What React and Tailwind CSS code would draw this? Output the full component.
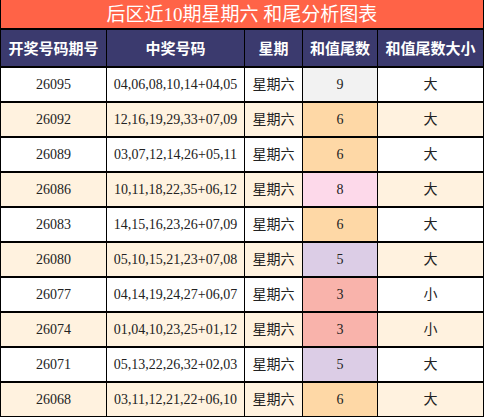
// 后区近10期星期六 和尾分析图表

const rows = [
  { qi: '26095', code: '04,06,08,10,14+04,05', tail: 9, size: '大' },
  { qi: '26092', code: '12,16,19,29,33+07,09', tail: 6, size: '大' },
  { qi: '26089', code: '03,07,12,14,26+05,11', tail: 6, size: '大' },
  { qi: '26086', code: '10,11,18,22,35+06,12', tail: 8, size: '大' },
  { qi: '26083', code: '14,15,16,23,26+07,09', tail: 6, size: '大' },
  { qi: '26080', code: '05,10,15,21,23+07,08', tail: 5, size: '大' },
  { qi: '26077', code: '04,14,19,24,27+06,07', tail: 3, size: '小' },
  { qi: '26074', code: '01,04,10,23,25+01,12', tail: 3, size: '小' },
  { qi: '26071', code: '05,13,22,26,32+02,03', tail: 5, size: '大' },
  { qi: '26068', code: '03,11,12,21,22+06,10', tail: 6, size: '大' },
]

const tailBg = {
  9: 'bg-[#f2f2f2]',
  8: 'bg-[#fdd9ea]',
  6: 'bg-[#fed8a6]',
  5: 'bg-[#dccde6]',
  3: 'bg-[#f9b3ab]',
}

const font = "font-['Liberation_Serif','Noto_Sans_CJK_SC',serif]"
const cols = ['w-[106px]', 'w-[138px]', 'w-[58px]', 'w-[75px]', 'flex-1']

export default function App() {
  return (
    <div className={`w-[484px] h-[417px] bg-white border-x border-black text-[#222] ${font}`}>
      <div className="h-[30px] border-b-2 border-black bg-[#ff6347] flex items-center justify-center text-white text-[19px] leading-none">
        后区近10期星期六 和尾分析图表
      </div>

      <div className="h-[38px] border-b-2 border-black bg-[#3b3a6e] flex text-white text-[15px] font-bold font-['Noto_Sans_CJK_SC',sans-serif]">
        {['开奖号码期号', '中奖号码', '星期', '和值尾数', '和值尾数大小'].map((t, i) => (
          <div key={t} className={`${cols[i]} flex items-center justify-center ${i < 4 ? 'border-r border-black' : ''}`}>
            {t}
          </div>
        ))}
      </div>

      {rows.map((r, idx) => {
        const last = idx === rows.length - 1
        const bg = idx % 2 ? 'bg-[#fff2df]' : 'bg-white'
        return (
          <div key={r.qi} className={`flex text-[14px] ${bg} ${last ? 'h-[34px] border-b' : 'h-[35px] border-b-2'} border-black`}>
            <div className={`${cols[0]} border-r border-black flex items-center justify-center`}>{r.qi}</div>
            <div className={`${cols[1]} border-r border-black flex items-center justify-center`}>{r.code}</div>
            <div className={`${cols[2]} border-r border-black flex items-center justify-center`}>星期六</div>
            <div className={`${cols[3]} border-r border-black flex items-center justify-center ${tailBg[r.tail]}`}>{r.tail}</div>
            <div className={`${cols[4]} flex items-center justify-center`}>{r.size}</div>
          </div>
        )
      })}
    </div>
  )
}
